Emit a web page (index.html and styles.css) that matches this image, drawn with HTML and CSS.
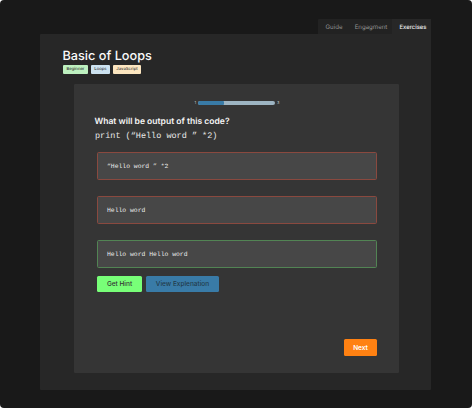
FILE: index.html
```html
<!DOCTYPE html>
<html lang="en">
<head>
<meta charset="utf-8">
<title>Basic of Loops</title>
<link rel="stylesheet" href="styles.css">
</head>
<body>
<div class="window">
  <nav class="tabs">
    <a class="tab tab-guide">Guide</a>
    <a class="tab tab-engagement">Engagment</a>
    <a class="tab tab-active">Exercises</a>
  </nav>
  <main class="panel">
    <h1 class="title">Basic of Loops</h1>
    <div class="tags">
      <span class="tag tag-level">Beginner</span>
      <span class="tag tag-topic">Loops</span>
      <span class="tag tag-language">JavaScript</span>
    </div>
    <section class="card">
      <div class="progress">
        <span class="step">1</span>
        <div class="track"><div class="fill"></div></div>
        <span class="step">3</span>
      </div>
      <h2 class="question">What will be output of this code?</h2>
      <code class="code">print (“Hello word ” *2)</code>
      <div class="options">
        <div class="option">“Hello word ” *2</div>
        <div class="option">Hello word</div>
        <div class="option option-correct">Hello word Hello word</div>
      </div>
      <div class="actions">
        <button class="button hint">Get Hint</button>
        <button class="button explain">View Explenation</button>
      </div>
      <button class="button next">Next</button>
    </section>
  </main>
</div>
</body>
</html>
```
FILE: styles.css
```css
* { box-sizing: border-box; }
body { margin: 0; background: #fff; font-family: Inter, sans-serif; text-rendering: geometricPrecision; }
.window {
  width: 472px; height: 408px; padding: 19px 41px 18px 40px;
  background: #191919; border-radius: 4px;
  display: flex; flex-direction: column;
}
.tabs { display: flex; align-self: flex-end; width: 113px; height: 15px; background: #222; border-radius: 1px 1px 0 0; }
.tab { display: flex; align-items: center; justify-content: center; font-size: 6.1px; line-height: 8px; color: #929292; padding-top: 3px; }
.tab-guide { width: 31px; }
.tab-engagement { width: 43px; padding-left: 1px; }
.tab-active { width: 39px; background: #272727; color: #f2f2f2; font-weight: 500; font-size: 5.9px; }
.tab-guide { padding-left: 1px; }
.tab-active { padding-left: 3px; }
.panel { flex: 1; background: #272727; border-radius: 1px 0 1px 1px; padding: 15px 32px 17px 34px; display: flex; flex-direction: column; }
.title { margin: 0 0 0 -11.5px; font-size: 12.7px; line-height: 16px; font-weight: 500; color: #fafafa; white-space: nowrap; }
.tags { display: flex; gap: 3px; height: 9px; margin: 0 0 10px -11px; }
.tag { display: flex; align-items: center; justify-content: center; border-radius: 1px; font-size: 4.2px; line-height: 9px; font-weight: 500; color: #333; }
.tag-level { width: 25px; background: #bdf0bf; }
.tag-topic { width: 19px; background: #cce2f0; }
.tag-language { width: 28px; background: #fce6c0; }
.card { flex: 1; background: #353535; border-radius: 1px; padding: 16px 22px 17px 23px; display: flex; flex-direction: column; }
.progress { display: flex; align-items: center; justify-content: center; height: 5px; gap: 2px; }
.step { font-size: 4px; line-height: 5px; color: #c0c0c0; }
.track { width: 77px; height: 4px; margin-top: 1px; border-radius: 2px; background: #9db4c2; overflow: hidden; }
.fill { width: 34%; height: 100%; border-radius: 1px; background: #397ba7; }
.question { margin: 11px 0 0 -2.5px; font-size: 8.55px; line-height: 12px; font-weight: 600; color: #f5f5f5; white-space: nowrap; }
.code { margin: 2px 0 0 -2px; font: 8.5px/12px "Liberation Mono", monospace; color: #e8e8e8; white-space: pre; }
.options { display: grid; gap: 16px; margin-top: 10px; }
.option { height: 28px; padding: 1px 9px 0; display: flex; align-items: center; border: 1px solid #8a493f; border-radius: 1.5px; background: #474747; font: 6.4px/8px "Liberation Mono", monospace; color: #ececec; white-space: pre; }
.option-correct { border-color: #528454; }
.actions { display: flex; gap: 4px; margin-top: 8px; }
.button { height: 16px; padding: 0; border: 0; border-radius: 1.5px; font: 500 6.5px/16px Inter, sans-serif; white-space: nowrap; }
.hint { width: 45px; background: #78ff78; color: #333; }
.explain { width: 73px; background: #397ba7; color: #233b4c; }
.next { width: 33px; height: 17px; margin-top: auto; align-self: flex-end; background: #ff8112; color: #fff; font-weight: 600; }
```
